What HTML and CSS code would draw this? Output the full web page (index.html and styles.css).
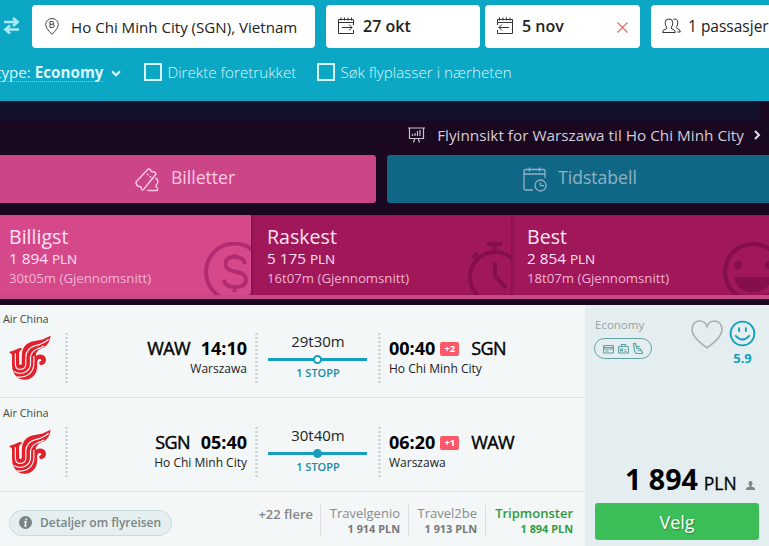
FILE: index.html
```html
<!DOCTYPE html>
<html lang="no">
<head>
  <meta charset="UTF-8">
  <meta name="viewport" content="width=device-width, initial-scale=1.0">
  <title>Flyreiser Warszawa - Ho Chi Minh City</title>
  <link rel="stylesheet" href="styles.css">
</head>
<body>

  <svg class="defs" width="0" height="0">
    <symbol id="airchina" viewBox="0 0 125 136">
      <path fill="#e2202b" d="M0 50L14 46 32 38 40 40 30 50V86Q34 92 38 86V62Q38 30 66 20L100 13 124 2Q121 26 104 36L88 44Q80 50 80 62Q90 55 101 59Q113 66 109 80Q104 92 92 88Q86 80 96 77Q98 70 89 71Q84 73 84 84Q85 106 76 118Q64 134 44 133Q22 130 14 112Q9 102 9 88V58z"/>
      <g fill="none" stroke="#f3f7f8" stroke-width="3.500">
        <path d="M19 54V88Q20 102 34 102Q50 101 50 86V64Q52 40 76 32Q102 26 118 12"/>
        <path d="M14 108Q34 119 50 109Q64 100 64 84V66Q66 48 84 41Q96 37 104 32"/>
        <path d="M24 124Q48 128 62 114Q74 102 74 84V62"/>
      </g>
    </symbol>
    <symbol id="face" viewBox="0 0 28 28">
      <g fill="none" stroke="currentColor" stroke-width="2" stroke-linecap="round">
        <circle cx="14" cy="14" r="12.3"/>
        <path d="M10.500 8.500v3M17.500 8.500v3M7 16.500q7 7.500 14 0"/>
      </g>
    </symbol>
  </svg>

  <header class="search">
    <div class="search-fields">
      <svg class="swap" viewBox="0 0 17 17" fill="none" stroke="#a9ecf7" stroke-width="2.600"><path d="M1 5h13M10 1l4.500 4L10 9M16 12.500H3M7 8.500l-4.500 4 4.500 4"/></svg>
      <div class="field field-place">
        <svg width="14" height="17" viewBox="0 0 14 17" fill="none" stroke="#444" stroke-width="1"><path d="M7 16.300Q.7 10 .7 6.700a6.300 6.200 0 0 1 12.600 0Q13.300 10 7 16.300zM5 3.500v6h2.500a1.600 1.600 0 0 0 0-3.200H5M5 3.500h2.200a1.400 1.400 0 0 1 0 2.800"/></svg>
        <span>Ho Chi Minh City (SGN), Vietnam</span>
      </div>
      <div class="field field-out">
        <svg width="18" height="18" viewBox="0 0 18 18" fill="none" stroke="#333" stroke-width="1"><path d="M16.500 8V2.500H1.500v14h15V13M1.500 5.500h15M4 .5v3M7.500.5v3M11 .5v3M14.500.5v3M5 10.500h10M12 7.500l3 3-3 3"/></svg>
        <b>27 okt</b>
      </div>
      <div class="field field-back">
        <svg width="18" height="18" viewBox="0 0 18 18" fill="none" stroke="#333" stroke-width="1"><path d="M1.500 8V2.500h15v14h-15V13M1.500 5.500h15M3.500.5v3M7 .5v3M10.500.5v3M14 .5v3M13 10.500H3M6 7.500l-3 3 3 3"/></svg>
        <b>5 nov</b>
        <svg class="clear" width="11" height="11" viewBox="0 0 11 11" stroke="#df6a62" stroke-width="1.200"><path d="M.5.5l10 10M10.500.5l-10 10"/></svg>
      </div>
      <div class="field field-pax">
        <svg width="19" height="16" viewBox="0 0 19 16" fill="none" stroke="#333" stroke-width="1"><path d="M.6 14.500q0-3 3.400-3.500l1-1Q3.200 7.500 3.200 4.500A3.700 3.700 0 0 1 7 1a3.700 3.700 0 0 1 3.800 3.500Q10.800 7.500 9 10l1 1q3.300.5 3.300 3.500zM11.500 1.200q4-1 4.300 3.300Q15.800 7 14.300 9.500l.7 1q3.200.5 3.300 3.500h-3"/></svg>
        <span>1 passasjer</span>
      </div>
    </div>
    <div class="search-options">
      <span class="ticket-type">type: <b>Economy</b></span>
      <svg class="caret" width="10" height="7" viewBox="0 0 10 7" fill="none" stroke="#d8f8fd" stroke-width="2.200"><path d="M1 1.200l4 4 4-4"/></svg>
      <label class="check check-direct"><i></i>Direkte foretrukket</label>
      <label class="check check-near"><i></i>Søk flyplasser i nærheten</label>
    </div>
  </header>

  <div class="strip"></div>
  <div class="insight">
    <svg width="17" height="16" viewBox="0 0 17 16" fill="none" stroke="#cbc2cd" stroke-width="1.200"><path d="M0 1h17M1.500 1v10.500h14V1M4.500 9V7M7 9V6M9.500 9V4M12 9V3M6.800 11.500L5.500 15.500M10.200 11.500l1.300 4"/></svg>
    <span>Flyinnsikt for Warszawa til Ho Chi Minh City</span>
    <svg class="arrow" width="7" height="10" viewBox="0 0 7 10" fill="none" stroke="#e6dfe6" stroke-width="2"><path d="M1 1l4 4-4 4"/></svg>
  </div>

  <nav class="tabs">
    <div class="tab tab-tickets">
      <svg width="24" height="24" viewBox="0 0 24 24" fill="none" stroke="#ffc9e6" stroke-width="1.400" stroke-linejoin="round"><path d="M1 14L13 1.200q1-.8 2 0 1 3 3.500 2.600 2 0 2.500 2.200L8.500 21.500q-1.500 1.500-2-.5 0-3-3-2.500Q1 17.500 1 14zM12.500 22.500H22.500v-2.500q-3-2 0-4.500l.3-2q0-3-2.500-3.300"/><path d="M12 6l6 5" stroke-dasharray="2 1.500"/></svg>
      <span>Billetter</span>
    </div>
    <div class="tab tab-table">
      <svg width="24" height="25" viewBox="0 0 24 25" fill="none" stroke="#8fb3c4" stroke-width="1.300"><path d="M10 23H2.500Q1 23 1 21.500V4q0-1.500 1.500-1.500h18Q22 2.500 22 4v7M1 7h21M6.500.5v4M16.500.5v4"/><circle cx="17.500" cy="18.500" r="5.500"/><path d="M17.500 15.500v3.200H21"/></svg>
      <span>Tidstabell</span>
    </div>
  </nav>

  <section class="sorts">
    <div class="sort active">
      <h2>Billigst</h2>
      <p class="price">1 894 <small>PLN</small></p>
      <p class="avg">30t05m (Gjennomsnitt)</p>
      <svg class="mark" width="47" height="53" viewBox="0 0 47 53" fill="none" stroke="#b22b70" stroke-width="4"><circle cx="30.500" cy="30" r="28.500"/><path d="M41 22q-1-7-10.500-7-9 0-9 7 0 6 9.500 7.500 11 1.500 11 8.500 0 7-11 7-10 0-11-7M30.500 12v5M30.500 44v6"/></svg>
    </div>
    <div class="sort">
      <h2>Raskest</h2>
      <p class="price">5 175 <small>PLN</small></p>
      <p class="avg">16t07m (Gjennomsnitt)</p>
      <svg class="mark" width="43" height="53" viewBox="0 0 43 53" fill="none" stroke="#850f4a" stroke-width="4"><circle cx="27" cy="35" r="25"/><path d="M19 2h15M27 2v8M4 16l6-5M27 20v14l11 12"/></svg>
    </div>
    <div class="sort">
      <h2>Best</h2>
      <p class="price">2 854 <small>PLN</small></p>
      <p class="avg">18t07m (Gjennomsnitt)</p>
      <svg class="mark" width="46" height="53" viewBox="0 0 46 53" fill="none" stroke="#850f4a" stroke-width="4"><circle cx="30" cy="30" r="28"/><g fill="#850f4a" stroke="none"><circle cx="15" cy="23" r="4"/><circle cx="46" cy="23" r="4"/><path d="M11 35h38q-3 15-19 15T11 35z"/></g></svg>
    </div>
  </section>

  <main class="result">
    <div class="trip">
      <div class="leg">
        <div class="airline">
          <span>Air China</span>
          <svg class="logo" width="42" height="46"><use href="#airchina"/></svg>
        </div>
        <div class="depart">
          <p class="time"><span>WAW</span> <b>14:10</b></p>
          <p class="city">Warszawa</p>
        </div>
        <div class="duration">
          <p>29t30m</p>
          <div class="line"><i class="dot open"></i></div>
          <p class="stops">1 STOPP</p>
        </div>
        <div class="arrive">
          <p class="time"><b>00:40</b><em>+2</em><span>SGN</span></p>
          <p class="city">Ho Chi Minh City</p>
        </div>
      </div>

      <div class="leg leg-return">
        <div class="airline">
          <span>Air China</span>
          <svg class="logo" width="42" height="46"><use href="#airchina"/></svg>
        </div>
        <div class="depart">
          <p class="time"><span>SGN</span> <b>05:40</b></p>
          <p class="city">Ho Chi Minh City</p>
        </div>
        <div class="duration">
          <p>30t40m</p>
          <div class="line"><i class="dot"></i></div>
          <p class="stops">1 STOPP</p>
        </div>
        <div class="arrive">
          <p class="time"><b>06:20</b><em>+1</em><span>WAW</span></p>
          <p class="city">Warszawa</p>
        </div>
      </div>

      <div class="offers">
        <a class="details">
          <svg width="13" height="13" viewBox="0 0 13 13"><circle cx="6.500" cy="6.500" r="6.500" fill="#7b8384"/><path d="M7.300 2.500v1.700M5.300 5.800h1.500L6.200 10h1.300" fill="none" stroke="#fff" stroke-width="1.500"/></svg>
          <span>Detaljer om flyreisen</span>
        </a>
        <span class="more">+22 flere</span>
        <div class="offer offer-a"><span>Travelgenio</span><b>1 914 PLN</b></div>
        <div class="offer offer-b"><span>Travel2be</span><b>1 913 PLN</b></div>
        <div class="offer best"><span>Tripmonster</span><b>1 894 PLN</b></div>
      </div>
    </div>

    <aside class="buy">
      <div class="buy-top">
        <div class="cabin">
          <span>Economy</span>
          <div class="perks">
            <svg width="11" height="10" viewBox="0 0 11 10" fill="none" stroke="#5fa3a5" stroke-width="1.200"><path d="M1.500 1.500h8q1 0 1 1V8q0 1-1 1h-8q-1 0-1-1V2.500q0-1 1-1zM.5 3.500h10M.5 5h10M2.500 7h3"/></svg>
            <svg width="11" height="10" viewBox="0 0 11 10" fill="none" stroke="#5fa3a5" stroke-width="1.200"><path d="M1.500 2.500h8q1 0 1 1V8q0 1-1 1h-8q-1 0-1-1V3.500q0-1 1-1zM3.500 2.500v-2h4v2M2.500 7V5h2v2zM6.500 5.500h2M6.500 7.500h2"/></svg>
            <svg width="10" height="11" viewBox="0 0 10 11" fill="none" stroke="#5fa3a5" stroke-width="1.200"><path d="M.5.5h2L4 5.500h3l2.500 4v1H4Q2 10 1.500 7.500zM4 3.500h3M4.500 7.500h3"/></svg>
          </div>
        </div>
        <svg class="heart" width="32" height="29" viewBox="0 0 32 29" fill="none" stroke="#abb1b5" stroke-width="1.700"><path d="M16 27.800Q1 17.500 1 9.300 1.500 1 9 1q5 0 7 5.500Q18 1 23.500 1 30.500 1.500 31 9.300 31 17.500 16 27.800z"/></svg>
        <div class="score">
          <svg width="27" height="27"><use href="#face"/></svg>
          <b>5.9</b>
        </div>
      </div>
      <div class="total">
        <b>1 894</b><span>PLN</span>
        <svg width="9" height="9" viewBox="0 0 9 9" fill="#7e8688"><path d="M4.500 0a2 2.200 0 0 1 2 2.200Q6.500 4 5.500 5v.8Q9 6.200 9 8v1H0V8q0-1.800 3.500-2.200V5q-1-1-1-2.800A2 2.200 0 0 1 4.500 0z"/></svg>
      </div>
      <button class="select">Velg</button>
    </aside>
  </main>

</body>
</html>
```
FILE: styles.css
```css
* {
  box-sizing: border-box;
}
body {
  margin: 0;
  width: 769px;
  height: 546px;
  overflow: hidden;
  background: #1a0720;
  font-family: "Open Sans", "Noto Sans", sans-serif;
  color: #111;
}
p, h2 {
  margin: 0;
  font-weight: 400;
}
b {
  font-weight: 600;
}
svg {
  display: block;
  flex: none;
}
span, label {
  white-space: nowrap;
}
.defs {
  position: absolute;
}

/* search bar */
.search {
  height: 101px;
  padding-top: 5px;
  background: #0ba7c5;
  overflow: hidden;
}
.search-fields {
  display: flex;
  height: 43px;
  width: 800px;
}
.swap {
  width: 17px;
  height: 17px;
  margin: 12px 12px 0 3px;
}
.field {
  display: flex;
  align-items: center;
  flex: none;
  height: 43px;
  background: #fff;
  border-radius: 4px;
  font-size: 16px;
  color: #222;
}
.field-place {
  width: 283px;
  padding-left: 13px;
  gap: 12px;
  margin-right: 11px;
  font-size: 15.1px;
}
.field-out {
  width: 154px;
  padding: 0 0 2px 11px;
  gap: 8px;
  margin-right: 5px;
}
.field-back {
  width: 155px;
  padding: 0 12px 2px 11px;
  gap: 8px;
  margin-right: 11px;
}
.field-pax {
  width: 140px;
  padding: 0 0 2px 11px;
  gap: 7px;
  font-size: 15.5px;
}
.clear {
  margin: 3px 0 0 auto;
}
.search-options {
  display: flex;
  align-items: center;
  height: 48px;
  font-size: 15.2px;
  color: #d8f8fd;
}
.ticket-type {
  line-height: 18px;
  margin-left: -4px;
  border-bottom: 1px dotted #6fd3e5;
}
.ticket-type b {
  font-weight: 700;
}
.caret {
  margin: 2px 0 0 8px;
}
.check {
  display: flex;
  align-items: center;
  font-weight: 300;
  font-size: 15.2px;
  gap: 5px;
}
.check i {
  width: 18px;
  height: 18px;
  border: 2.5px solid #d8f8fd;
}
.check-direct {
  margin-left: 23px;
}
.check-near {
  margin-left: 21px;
}

.strip {
  width: 759px;
  height: 20px;
  background: #12102a;
}
.insight {
  display: flex;
  align-items: center;
  justify-content: flex-end;
  height: 34px;
  padding: 0 8px 7px 0;
  font-size: 15.3px;
  color: #d5ccd7;
}
.insight span {
  margin: 0 10px 0 12px;
}

/* tabs */
.tabs {
  display: grid;
  grid-template-columns: 376px 382px;
  gap: 11px;
  height: 48px;
}
.tab {
  display: flex;
  align-items: center;
  font-size: 17.600px;
  padding-bottom: 4px;
}
.tab svg {
  margin-top: 5px;
}
.tab-tickets {
  padding-left: 135px;
  gap: 12px;
  background: #cc4587;
  border-radius: 0 3px 3px 0;
  color: #ffc9e6;
}
.tab-table {
  padding-left: 136px;
  gap: 11px;
  background: #106785;
  border-radius: 3px 0 0 3px;
  color: #8fb3c4;
}

/* sort options */
.sorts {
  display: grid;
  grid-template-columns: 251px 260px 258px;
  height: 84px;
  margin-top: 12px;
  border-bottom: 4px solid #c74886;
}
.sort {
  position: relative;
  padding: 9px 0 0 16px;
  background: #a0175a;
  box-shadow: inset 2px 0 3px -1px #7d1048;
  color: #ffe3f2;
}
.sort.active {
  padding-left: 9px;
  background: #d5498b;
  box-shadow: none;
}
.sort h2 {
  font-size: 19.600px;
  line-height: 25px;
}
.sort .price {
  font-size: 15.3px;
  line-height: 19px;
}
.sort small {
  font-size: 13.500px;
}
.sort .avg {
  font-size: 13.2px;
  line-height: 18px;
  color: #f3b3d3;
}
.mark {
  position: absolute;
  right: 0;
  bottom: 0;
}

/* result card */
.result {
  display: grid;
  grid-template-columns: 585px 184px;
  height: 241px;
  margin-top: 6px;
}
.trip {
  background: #f3f7f8;
}
.leg {
  display: grid;
  grid-template-columns: 68px 190px 123px 204px;
  height: 93px;
  border-bottom: 1px solid #dce1e3;
}
.leg-return {
  height: 94px;
  padding-top: 1px;
}
.airline span {
  display: block;
  padding: 6px 0 0 3px;
  font-size: 10.800px;
  line-height: 16px;
  color: #444;
}
.logo {
  margin: 8px 0 0 9px;
}
.airline, .depart, .duration {
  position: relative;
}
.airline::after, .depart::after, .duration::after {
  content: "";
  position: absolute;
  top: 27px;
  right: 0;
  width: 3px;
  height: 52px;
  background: radial-gradient(circle, #cfd3d5 1px, transparent 1.5px) 0 0 / 3px 4px;
}
.depart, .arrive {
  padding-top: 31px;
}
.depart {
  text-align: right;
  padding-right: 11px;
}
.arrive {
  padding-left: 8px;
}
.time {
  font-size: 18px;
  line-height: 25px;
  color: #000;
}
.time span {
  letter-spacing: -0.6px;
  -webkit-text-stroke: 0.4px #000;
}
.time b {
  font-weight: 700;
}
.depart .time b {
  margin-left: 6px;
}
.time em {
  display: inline-block;
  width: 19px;
  height: 14px;
  margin: 0 12px 0 5px;
  border-radius: 2px;
  background: #fb5868;
  color: #fff;
  font: 700 9.500px/14px "Open Sans", sans-serif;
  text-align: center;
  vertical-align: 3px;
}
.city {
  font-size: 12px;
  line-height: 15px;
  color: #222;
}
.duration {
  padding-top: 27px;
  text-align: center;
  font-size: 15px;
  line-height: 18px;
  color: #222;
}
.duration p {
  padding-right: 3px;
}
.line {
  position: relative;
  width: 99px;
  height: 3px;
  margin: 8px auto 5px 10px;
  background: #149fbd;
}
.dot {
  position: absolute;
  left: 45px;
  top: -3px;
  width: 9px;
  height: 9px;
  border: 2px solid #149fbd;
  border-radius: 50%;
  background: #149fbd;
}
.dot.open {
  background: #fff;
}
.stops {
  font-size: 11px;
  line-height: 14px;
  font-weight: 600;
  color: #188ba5;
}

/* offers row */
.offers {
  display: flex;
  align-items: flex-start;
  height: 54px;
  padding: 14px 12px 0 9px;
}
.details {
  display: flex;
  align-items: center;
  width: 163px;
  height: 26px;
  margin-top: 4px;
  padding: 0 0 1px 9px;
  gap: 8px;
  border: 1px solid #c9dadd;
  border-radius: 13px;
  background: #e5eff0;
  font-size: 12px;
  font-weight: 600;
  color: #7c8586;
}
.more {
  margin: -1px 7px 0 auto;
  font-size: 13px;
  line-height: 18px;
  font-weight: 600;
  color: #858585;
}
.offer {
  display: flex;
  flex-direction: column;
  align-items: flex-end;
  height: 31px;
  margin-top: -1px;
  padding-right: 8px;
  border-left: 1px solid #dcdfe1;
  font-size: 13px;
  line-height: 16px;
  color: #8b8b8b;
}
.offer b {
  font-size: 10.900px;
  line-height: 15px;
  font-weight: 700;
  color: #777;
}
.offer-a {
  width: 88px;
}
.offer-b {
  width: 77px;
}
.offer.best {
  width: 88px;
  padding-right: 0;
  font-weight: 600;
}
.offer.best, .offer.best b {
  color: #2d9b40;
}

/* price column */
.buy {
  display: flex;
  flex-direction: column;
  padding: 0 10px 0 10px;
  background: #e4eef0;
}
.buy-top {
  display: flex;
  height: 151px;
  padding-top: 12px;
}
.cabin {
  width: 96px;
  font-size: 11.5px;
  line-height: 16px;
  color: #99a0a3;
}
.perks {
  display: flex;
  align-items: center;
  justify-content: center;
  gap: 4px;
  width: 58px;
  height: 21px;
  margin: 5px 0 0 -1px;
  border: 1px solid #5fa3a5;
  border-radius: 11px;
}
.heart {
  margin-top: 3px;
}
.score {
  margin: 3px -4px 0 6px;
  width: 27px;
  color: #149fbd;
  text-align: center;
}
.score b {
  display: block;
  font-size: 13px;
  line-height: 22px;
  font-weight: 700;
}
.total {
  display: flex;
  align-items: baseline;
  height: 47px;
  padding: 0 4px 0 30px;
  line-height: 46px;
  color: #000;
}
.total b {
  font-size: 28.600px;
  font-weight: 700;
}
.total span {
  margin-left: 6px;
  font-size: 17.5px;
  -webkit-text-stroke: 0.3px #000;
}
.total svg {
  margin-left: auto;
}
.select {
  height: 37px;
  padding: 0;
  border: 0;
  border-radius: 3px;
  background: #3bbd57;
  color: #fff;
  font: 400 18px "Open Sans", sans-serif;
  text-shadow: 1px 1px 1px #258a3c;
}
```
